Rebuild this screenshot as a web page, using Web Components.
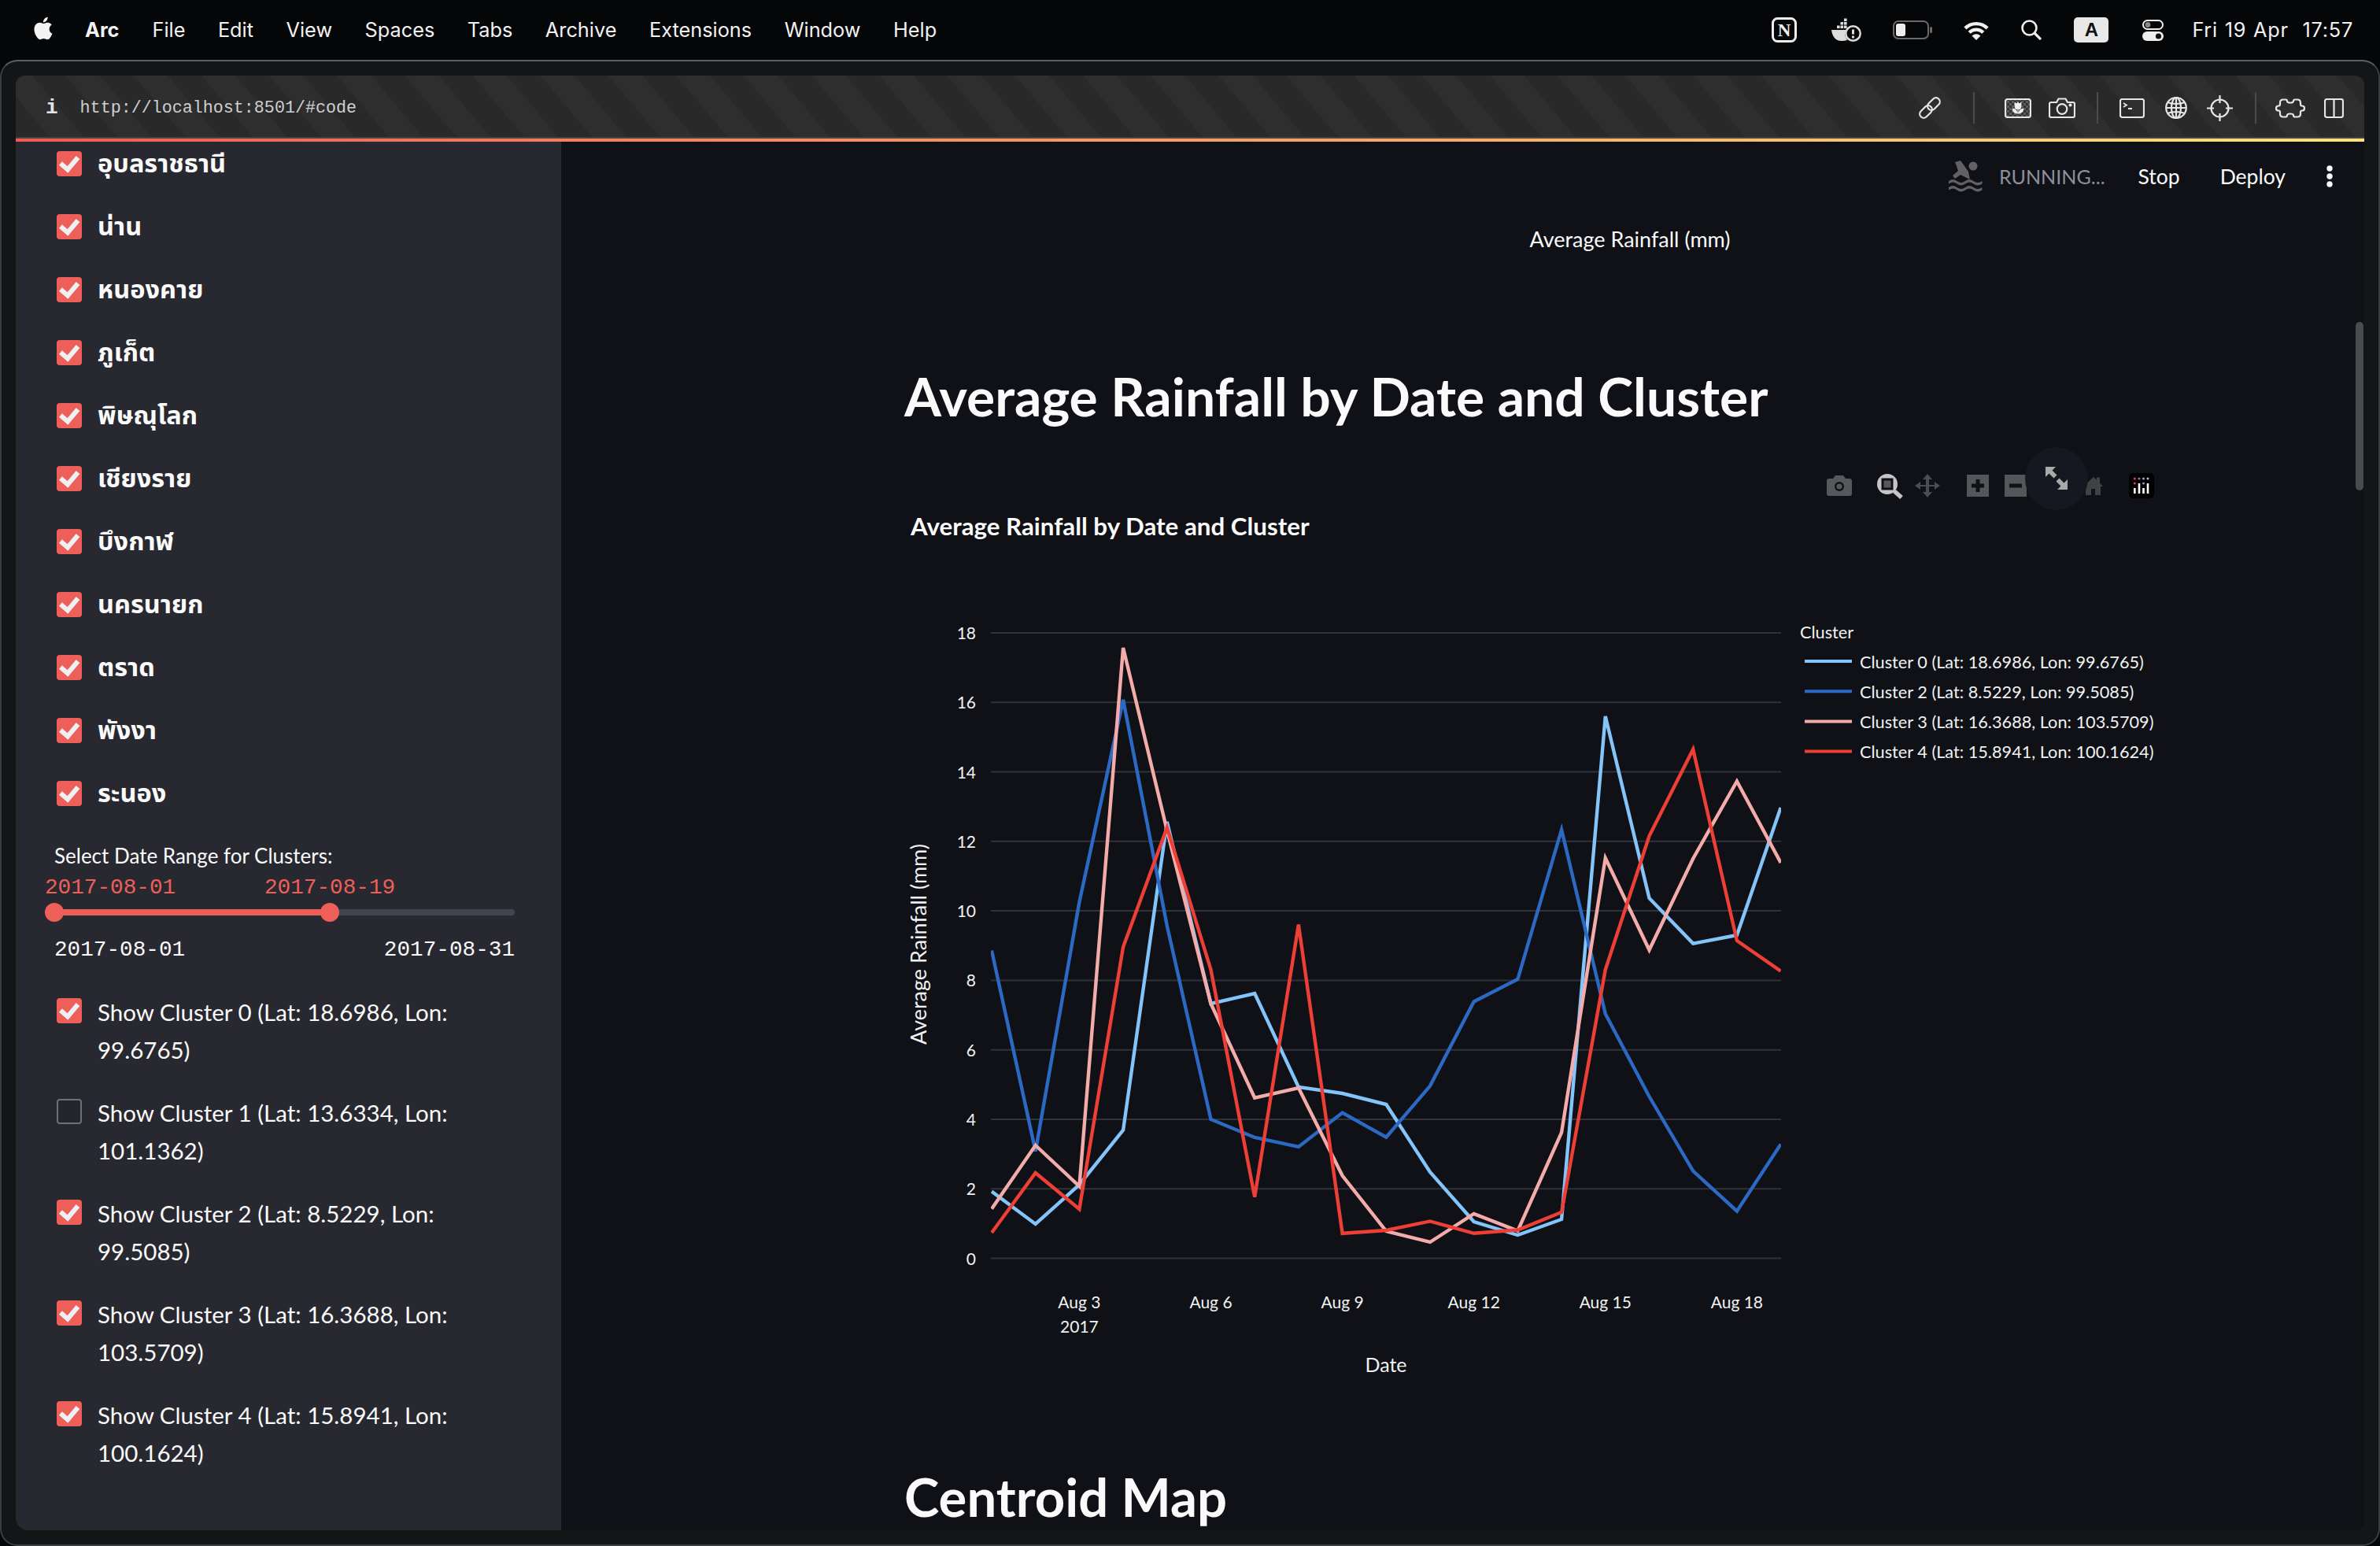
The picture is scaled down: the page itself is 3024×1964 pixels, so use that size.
<!DOCTYPE html>
<html lang="en">
<head>
<meta charset="utf-8">
<title>Average Rainfall</title>
<style>
  html, body { margin: 0; padding: 0; }
  body {
    width: 3024px;
    height: 1964px;
    overflow: hidden;
    background: #050608;
    color: #fafafa;
    font-family: "Lato", "Noto Sans", "Noto Sans Thai", "DejaVu Sans", sans-serif;
    display: flex;
    flex-direction: column;
  }
</style>
</head>
<body>
  <mac-menubar></mac-menubar>
  <browser-window>
    <url-bar></url-bar>
    <div style="display:flex;flex:1;min-height:0">
      <app-sidebar>
        <st-check checked lang="th">อุบลราชธานี</st-check>
        <st-check checked lang="th">น่าน</st-check>
        <st-check checked lang="th">หนองคาย</st-check>
        <st-check checked lang="th">ภูเก็ต</st-check>
        <st-check checked lang="th">พิษณุโลก</st-check>
        <st-check checked lang="th">เชียงราย</st-check>
        <st-check checked lang="th">บึงกาฬ</st-check>
        <st-check checked lang="th">นครนายก</st-check>
        <st-check checked lang="th">ตราด</st-check>
        <st-check checked lang="th">พังงา</st-check>
        <st-check checked lang="th">ระนอง</st-check>
        <date-slider></date-slider>
        <st-check checked>Show Cluster 0 (Lat: 18.6986, Lon: 99.6765)</st-check>
        <st-check>Show Cluster 1 (Lat: 13.6334, Lon: 101.1362)</st-check>
        <st-check checked>Show Cluster 2 (Lat: 8.5229, Lon: 99.5085)</st-check>
        <st-check checked>Show Cluster 3 (Lat: 16.3688, Lon: 103.5709)</st-check>
        <st-check checked>Show Cluster 4 (Lat: 15.8941, Lon: 100.1624)</st-check>
      </app-sidebar>
      <app-main>
        <rain-chart></rain-chart>
      </app-main>
    </div>
  </browser-window>

<script>
class MacMenubar extends HTMLElement {
  constructor() {
    super();
    const shadow = this.attachShadow({ mode: "open" });
    const items = ["File", "Edit", "View", "Spaces", "Tabs", "Archive", "Extensions", "Window", "Help"];
    shadow.innerHTML = `
      <style>
        :host { display: flex; align-items: center; box-sizing: border-box; height: 76px; padding-bottom: 2px; flex: none; font-family: "Inter", sans-serif; font-size: 25.3px; color: #f2f2f2; }
        .apple { margin-left: 38px; width: 34px; height: 34px; margin-top: -2px; }
        b { margin-left: 36px; font-weight: 700; }
        .menu { display: flex; gap: 41.5px; margin-left: 42px; }
        .right { margin-left: auto; display: flex; align-items: center; padding-right: 34px; padding-top: 2px; }
        .clock { margin-left: 36px; word-spacing: 1px; letter-spacing: .75px; margin-top: -2px; }
        svg { display: block; }
        .key { width: 44px; height: 32px; border-radius: 5px; background: #e8e8e8; color: #111; display: flex; align-items: center; justify-content: center; font: 700 24px "Liberation Sans", sans-serif; }
      </style>
      <svg class="apple" viewBox="0 0 24 24" fill="#f4f4f4"><path d="M18.71 19.5c-.83 1.24-1.71 2.45-3.05 2.47-1.34.03-1.77-.79-3.29-.79-1.53 0-2 .77-3.27.82-1.31.05-2.3-1.32-3.14-2.53C4.25 17 2.94 12.45 4.7 9.39c.87-1.52 2.43-2.48 4.12-2.51 1.28-.02 2.5.87 3.29.87.78 0 2.26-1.07 3.81-.91.65.03 2.47.26 3.64 1.98-.09.06-2.17 1.28-2.15 3.81.03 3.02 2.65 4.03 2.68 4.04-.03.07-.42 1.44-1.38 2.83M13 3.5c.73-.83 1.94-1.46 2.94-1.5.13 1.17-.34 2.35-1.04 3.19-.69.85-1.83 1.51-2.95 1.42-.15-1.15.41-2.35 1.05-3.11z"/></svg>
      <b>Arc</b>
      <div class="menu">${items.map((m) => `<span>${m}</span>`).join("")}</div>
      <div class="right">
        <svg width="32" height="32" viewBox="0 0 32 32"><rect x="1.5" y="1.5" width="29" height="29" rx="6" fill="none" stroke="#eee" stroke-width="3"/><text x="16" y="24" text-anchor="middle" font-family="Liberation Serif" font-weight="700" font-size="23" fill="#eee">N</text></svg>
        <svg style="margin-left:44px" width="38" height="30" viewBox="0 0 38 30" fill="#ddd">
          <path d="M0 15h19a10 10 0 0 0-1 9l2 4q-3 1-7 1C5 29 1 23 0 15z"/>
          <path d="M7 9.500h3.600v3.600H7zM11.500 9.500h3.600v3.600h-3.600zM16 9.500h3.600v3.600H16zM11.500 5h3.600v3.600h-3.600zM16 5h3.600v3.600H16zM16 .5h3.600v3.600H16z"/>
          <circle cx="27.500" cy="19.500" r="9.200" fill="#050608" stroke="#ddd" stroke-width="2.500"/>
          <path d="M27.500 14.500v6" stroke="#ddd" stroke-width="3"/><circle cx="27.500" cy="24" r="1.700"/>
        </svg>
        <svg style="margin-left:40px" width="51" height="24" viewBox="0 0 51 24"><rect x="1" y="1" width="44" height="22" rx="6" fill="none" stroke="#6a6a6a" stroke-width="2"/><rect x="4" y="4" width="12" height="16" rx="3" fill="#eee"/><rect x="47" y="8" width="3" height="8" rx="1.500" fill="#6a6a6a"/></svg>
        <svg style="margin-left:38px" width="34" height="26" viewBox="0 0 34 26" fill="none" stroke="#f0f0f0" stroke-width="4.400"><path d="M2.900 10.900a20 20 0 0 1 28.200 0M8.200 16.200a12.500 12.500 0 0 1 17.600 0"/><path d="M17 26l-5.500-5.500a7.800 7.800 0 0 1 11 0z" fill="#f0f0f0" stroke="none"/></svg>
        <svg style="margin-left:40px" width="26" height="26" viewBox="0 0 26 26" fill="none" stroke="#eee"><circle cx="10.500" cy="10.500" r="9" stroke-width="2.600"/><path d="M17 17l8 8" stroke-width="3.200"/></svg>
        <span class="key" style="margin-left:41px">A</span>
        <svg style="margin-left:43px" width="27" height="27" viewBox="0 0 27 27"><rect x="1" y="1" width="25" height="11" rx="5.500" fill="none" stroke="#eee" stroke-width="2"/><circle cx="7" cy="6.500" r="3.400" fill="#888"/><rect y="15" width="27" height="12" rx="6" fill="#eee"/><circle cx="20.500" cy="21" r="3.600" fill="#111"/></svg>
        <span class="clock">Fri 19 Apr&nbsp; 17:57</span>
      </div>
    `;
  }
}

class BrowserWindow extends HTMLElement {
  constructor() {
    super();
    this.attachShadow({ mode: "open" }).innerHTML = `
      <style>
        :host {
          display: flex;
          flex-direction: column;
          flex: 1;
          min-height: 0;
          box-sizing: border-box;
          padding: 18px 18px 18px 18px;
          background: #141517;
          border: 2px solid #3c3d3e;
          border-top-color: #5e5f60;
          border-radius: 22px;
        }
      </style>
      <slot></slot>
    `;
  }
}

class UrlBar extends HTMLElement {
  constructor() {
    super();
    this.attachShadow({ mode: "open" }).innerHTML = `
      <style>
        :host { display: block; flex: none; }
        .bar {
          display: flex;
          align-items: center;
          height: 78px;
          box-sizing: border-box;
          padding: 4px 26px 0 38px;
          border-radius: 12px 12px 0 0;
          color: #cfcfcf;
          background: repeating-linear-gradient(50deg, #29292a 0 33px, #2e2e2f 33px 66px);
          font: 21.7px "Liberation Mono", monospace;
        }
        .band { height: 2px; background: #444445; }
        .line { height: 4px; background: linear-gradient(90deg, #ee5a52, #f4875f 30%, #f6a866 60%, #fde47f); }
        .i { font-weight: 700; color: #e4e4e4; font-size: 26px; }
        .url { margin-left: 28px; }
        .tools { margin-left: auto; display: flex; align-items: center; }
        .sep { width: 2px; height: 40px; background: #4b4b4c; }
        svg { display: block; fill: none; stroke: #e6e6e6; stroke-width: 2.2; }
      </style>
      <div class="bar">
      <span class="i">i</span>
      <span class="url">http://localhost:8501/#code</span>
      <div class="tools">
        <svg width="30" height="30" viewBox="0 0 30 30"><g transform="rotate(45 15 15)"><rect x="10" y="-1" width="10" height="18" rx="5"/><rect x="10" y="13" width="10" height="18" rx="5"/></g></svg>
        <span class="sep" style="margin-left:40px"></span>
        <svg style="margin-left:38px" width="34" height="25" viewBox="0 0 34 25">
          <defs><pattern id="ch" width="6" height="6" patternUnits="userSpaceOnUse"><rect width="6" height="6" fill="#333" stroke="none"/><rect width="3" height="3" fill="#5c5c5c" stroke="none"/><rect x="3" y="3" width="3" height="3" fill="#5c5c5c" stroke="none"/></pattern></defs>
          <rect x="1" y="1" width="32" height="23" rx="3" fill="url(#ch)"/>
          <path d="M13 5l2 2 2-2 2 2 2-2v5a4 4 0 0 1-8 0zM17 14v6M10 13q5 0 6.500 6q-6 0-6.500-6zM24 13q-5 0-6.500 6q6 0 6.500-6z" fill="#f0f0f0" stroke="#f0f0f0" stroke-width=".8"/>
        </svg>
        <svg style="margin-left:22px" width="34" height="26" viewBox="0 0 34 26"><path d="M3 6h7l2.500-4.500h9L24 6h7q2 0 2 2v15q0 2-2 2H3q-2 0-2-2V8q0-2 2-2z"/><circle cx="17" cy="14.500" r="6.300"/><circle cx="27.500" cy="9.500" r="1" fill="#e6e6e6"/></svg>
        <span class="sep" style="margin-left:27px"></span>
        <svg style="margin-left:27px" width="32" height="25" viewBox="0 0 32 25"><rect x="1" y="1" width="30" height="23" rx="2.500"/><path d="M5 6l4 2.500L5 11M11 13h5" stroke-width="1.800"/></svg>
        <svg style="margin-left:26px" width="28" height="28" viewBox="0 0 28 28" stroke-width="1.800"><ellipse cx="14" cy="14" rx="12.800" ry="13"/><ellipse cx="14" cy="14" rx="6" ry="13"/><path d="M14 1v26M3 7q11 4 22 0M1.500 14h25M3 21q11-4 22 0"/></svg>
        <svg style="margin-left:25px" width="33" height="33" viewBox="0 0 33 33"><circle cx="16.500" cy="16.500" r="11"/><path d="M16.500 0v10M16.500 23v10M0 16.500h9M24 16.500h9"/></svg>
        <span class="sep" style="margin-left:28px"></span>
        <svg style="margin-left:24px" width="38" height="25" viewBox="0 0 38 25"><path d="M10 1.500h3q2 0 2 2t4 2q4 0 4-2t2-2h3q4 0 4 4v2q0 2 2 2 3 0 3 3t-3 3q-2 0-2 2v2q0 4-4 4h-3q-2 0-2-2t-4-2q-4 0-4 2t-2 2h-3q-4 0-4-4v-2q0-2-2-2-3 0-3-3t3-3q2 0 2-2v-2q0-4 4-4z"/></svg>
        <svg style="margin-left:24px" width="25" height="25" viewBox="0 0 25 25"><rect x="1" y="1" width="23" height="23" rx="2.500"/><path d="M12.500 1v23"/></svg>
      </div>
      </div>
      <div class="band"></div>
      <div class="line"></div>
    `;
  }
}

class AppSidebar extends HTMLElement {
  constructor() {
    super();
    this.attachShadow({ mode: "open" }).innerHTML = `
      <style>
        :host {
          display: flex;
          flex-direction: column;
          gap: 32px;
          flex: none;
          width: 693px;
          box-sizing: border-box;
          padding: 6px 59px 0 49px;
          background: #282930;
          border-radius: 0 0 0 16px;
          overflow: hidden;
        }
      </style>
      <slot></slot>
    `;
  }
}

class StCheck extends HTMLElement {
  constructor() {
    super();
    const checked = this.hasAttribute("checked");
    this.attachShadow({ mode: "open" }).innerHTML = `
      <style>
        :host { display: flex; gap: 20px; padding-left: 3px; font-size: 29.5px; line-height: 48px; color: #fafafa; }
        :host([lang="th"]) { font-size: 32.5px; font-weight: 700; height: 48px; }
        :host([lang="th"]) .label { margin-top: -3px; }
        .box { flex: none; box-sizing: border-box; width: 32px; height: 32px; margin-top: 6px; border-radius: 4px; }
        .on { background: #ef5f5a; }
        .off { background: #24252c; border: 2px solid #6f7076; }
        svg { display: block; }
      </style>
      <span class="box ${checked ? "on" : "off"}">
        ${checked ? `<svg width="32" height="32" viewBox="0 0 32 32"><path d="M5 15.500l9 8L27 8" fill="none" stroke="#eff0f3" stroke-width="6"/></svg>` : ""}
      </span>
      <span class="label"><slot></slot></span>
    `;
  }
}

class DateSlider extends HTMLElement {
  constructor() {
    super();
    this.attachShadow({ mode: "open" }).innerHTML = `
      <style>
        :host { display: block; margin: 1px 0 3px; }
        .title { font-size: 26px; line-height: 40px; }
        .slider { position: relative; padding-top: 48px; }
        .mono { font: 27.7px "Liberation Mono", monospace; }
        .val { position: absolute; top: 2px; line-height: 38px; color: #ef5f5a; }
        .track { height: 8px; border-radius: 4px; background: #43444e; }
        .fill { height: 8px; width: 350px; border-radius: 4px 0 0 4px; background: #ef5f5a; }
        .thumb { position: absolute; top: 40px; width: 24px; height: 24px; border-radius: 50%; background: #ef5f5a; }
        .ticks { display: flex; justify-content: space-between; margin-top: 24px; line-height: 40px; color: #fafafa; }
      </style>
      <div class="title">Select Date Range for Clusters:</div>
      <div class="slider">
        <span class="mono val" style="left:-12px">2017-08-01</span>
        <span class="mono val" style="left:267px">2017-08-19</span>
        <div class="track"><div class="fill"></div></div>
        <span class="thumb" style="left:-12px"></span>
        <span class="thumb" style="left:338px"></span>
        <div class="mono ticks"><span>2017-08-01</span><span>2017-08-31</span></div>
      </div>
    `;
  }
}

class AppMain extends HTMLElement {
  constructor() {
    super();
    this.attachShadow({ mode: "open" }).innerHTML = `
      <style>
        :host { display: block; position: relative; flex: 1; min-width: 0; background: #0f1116; overflow: hidden; border-radius: 0 0 12px 0; }
        .bar { display: flex; align-items: center; justify-content: flex-end; height: 88px; padding-right: 40px; font-size: 26.5px; }
        .bar svg { display: block; }
        .status { color: #8d8f9b; margin-left: 21px; font-size: 25.1px; }
        .content { padding: 12px 11px 0 436px; }
        .caption { text-align: center; font-size: 27px; line-height: 48px; }
        h1 { margin: 135px 0 0; font-size: 67.8px; line-height: 80px; font-weight: 700; color: #fafafa; }
        h2 { margin: 71px 0 0; font-size: 67px; line-height: 80px; font-weight: 700; color: #fafafa; }
        .thumb { position: absolute; right: 1px; top: 229px; width: 10px; height: 214px; border-radius: 5px; background: #4a4b50; }
      </style>
      <div class="bar">
        <svg width="43" height="40" viewBox="0 0 43 40" fill="#626264">
          <circle cx="31" cy="7" r="5.500"/>
          <path d="M8 2l7-2 10 14 2 10-6-3-6-3-7 5-3-4 7-6-2-6z"/>
          <path d="M0 26q5-4 10.500 0t10.500 0 10.500 0 11 0v3.500q-6 4-11 0t-10.500 0-10.500 0-10.500 0zM0 34q5-4 10.500 0t10.500 0 10.500 0 11 0v3.500q-6 4-11 0t-10.500 0-10.500 0-10.500 0z"/>
        </svg>
        <span class="status">RUNNING...</span>
        <span style="margin-left:42px">Stop</span>
        <span style="margin-left:51px">Deploy</span>
        <svg style="margin-left:52px" width="8" height="28" viewBox="0 0 8 28" fill="#fafafa"><circle cx="4" cy="4" r="3.700"/><circle cx="4" cy="14" r="3.700"/><circle cx="4" cy="24" r="3.700"/></svg>
      </div>
      <div class="content">
        <div class="caption">Average Rainfall (mm)</div>
        <h1>Average Rainfall by Date and Cluster</h1>
        <slot></slot>
        <h2>Centroid Map</h2>
      </div>
      <div class="thumb"></div>
    `;
  }
}

// pixel readings of the lines, one y per day, Aug 1 to Aug 19
const SERIES = [
  { color: "#83c5fb", name: "Cluster 0 (Lat: 18.6986, Lon: 99.6765)", y: [1513.6, 1555, 1505, 1435.7, 1044, 1275, 1262, 1381, 1389, 1403, 1489, 1552, 1569, 1549, 910, 1141, 1198.6, 1188, 1026] },
  { color: "#2c69c4", name: "Cluster 2 (Lat: 8.5229, Lon: 99.5085)", y: [1207.5, 1462.5, 1146, 889, 1176, 1422, 1445, 1457, 1413.6, 1444.6, 1379.6, 1272.5, 1244, 1054, 1288, 1393, 1487.5, 1538.6, 1453.6] },
  { color: "#f3acaa", name: "Cluster 3 (Lat: 16.3688, Lon: 103.5709)", y: [1535.7, 1455, 1507, 823, 1055, 1275, 1394.6, 1382, 1493.6, 1564, 1578, 1542, 1563.6, 1438.6, 1090, 1206.8, 1090.7, 992.5, 1096] },
  { color: "#ee3f36", name: "Cluster 4 (Lat: 15.8941, Lon: 100.1624)", y: [1566, 1490, 1536, 1203, 1051.4, 1231.8, 1520.7, 1174.6, 1566.8, 1563, 1551.4, 1566.8, 1562.5, 1540, 1231.8, 1062, 952, 1195, 1233.6] },
];

class RainChart extends HTMLElement {
  constructor() {
    super();
    const shadow = this.attachShadow({ mode: "open" });
    const left = 1260, step = 55.7, zero = 1598.6;
    const xAt = (i) => left + i * step;
    const grid = [0, 2, 4, 6, 8, 10, 12, 14, 16, 18].map((v) => {
      const y = zero - v * 44.15;
      return `<line x1="1259" x2="2263" y1="${y}" y2="${y}" stroke="#31323b" stroke-width="2"/>
        <text x="1240" y="${y + 8}" text-anchor="end" class="tick">${v}</text>`;
    }).join("");
    const ticks = [["Aug 3", 2], ["Aug 6", 5], ["Aug 9", 8], ["Aug 12", 11], ["Aug 15", 14], ["Aug 18", 17]]
      .map(([t, i]) => `<text x="${xAt(i)}" y="1662" text-anchor="middle" class="tick">${t}</text>`).join("");
    const lines = SERIES.map((s) => `<polyline fill="none" stroke="${s.color}" stroke-width="4.4" stroke-linejoin="miter" points="${s.y.map((y, i) => `${xAt(i)},${y}`).join(" ")}"/>`).join("");
    const legend = SERIES.map((s, i) => {
      const y = 840 + i * 38.2;
      return `<line x1="2293" x2="2353" y1="${y}" y2="${y}" stroke="${s.color}" stroke-width="4"/>
        <text x="2363" y="${y + 8.5}" class="leg">${s.name}</text>`;
    }).join("");
    shadow.innerHTML = `
      <style>
        :host { display: block; margin-top: 17px; width: 1640px; height: 1230px; }
        svg { display: block; }
        text { fill: #f0f1f2; font-family: "Lato", "Noto Sans", sans-serif; }
        .tick { font-size: 21px; }
        .leg { font-size: 21.7px; }
        .axis { font-size: 25px; }
        .ytitle { font-size: 27px; }
        .title { font-size: 31.3px; font-weight: 700; fill: #fafafa; }
      </style>
      <svg width="1640" height="1230" viewBox="1149 560 1640 1230">
        <defs><clipPath id="plot"><rect x="1259" y="780" width="1004" height="840"/></clipPath></defs>
        <text x="1157" y="680" class="title">Average Rainfall by Date and Cluster</text>
        ${grid}
        <g clip-path="url(#plot)">${lines}</g>
        ${ticks}
        <text x="1371.4" y="1693" text-anchor="middle" class="tick">2017</text>
        <text x="1761" y="1743" text-anchor="middle" class="axis">Date</text>
        <text transform="translate(1177 1199.500) rotate(-90)" text-anchor="middle" class="ytitle">Average Rainfall (mm)</text>
        <text x="2287" y="811" class="leg">Cluster</text>
        ${legend}
        <!-- modebar -->
        <g fill="#57585b">
          <path d="M2321 611q0-3 3-3h5l3-4h10l3 4h5q3 0 3 3v16q0 3-3 3h-26q-3 0-3-3z"/>
          <circle cx="2337" cy="618" r="6" fill="#0f1116" stroke="none"/><circle cx="2337" cy="618" r="3.600"/>
        </g>
        <g>
          <circle cx="2398" cy="615" r="13" fill="#c6c6c6"/>
          <rect x="2392" y="609" width="12" height="12" fill="#57585b" stroke="#0f1116" stroke-width="3"/>
          <path d="M2407 624l9 8" stroke="#c6c6c6" stroke-width="5.500"/>
        </g>
        <path d="M2449 602l6 7h-4v7h7v-4l7 5-7 5v-4h-7v7h4l-6 7-6-7h4v-7h-7v4l-7-5 7-5v4h7v-7h-4z" fill="#4c4d50"/>
        <rect x="2499" y="603" width="28" height="28" fill="#55565a"/><path d="M2513 609v16M2505 617h16" stroke="#0f1116" stroke-width="5"/>
        <rect x="2547" y="603" width="28" height="28" fill="#55565a"/><path d="M2553 617h16" stroke="#0f1116" stroke-width="5"/>
        <path d="M2650 629v-11h-3l13-12 4 3.500v-3h4v7l4 4.500h-3v11h-7v-8h-5v8z" fill="#414245"/>
        <circle cx="2613" cy="608" r="40" fill="#151820"/>
        <g fill="#a9a9a9"><path d="M2599 593h13l-4.500 4.500 6 6-4 4-6-6-4.500 4.500z"/><path d="M2627 622h-13l4.500-4.500-6-6 4-4 6 6 4.500-4.500z"/></g>
        <rect x="2705" y="601" width="32" height="32" rx="5" fill="#000"/>
        <g fill="#e8336d"><circle cx="2712.300" cy="608" r="1.500"/><circle cx="2712.300" cy="614" r="1.500"/></g>
        <circle cx="2718" cy="608" r="1.500" fill="#b266b2"/><circle cx="2723.500" cy="608" r="1.500" fill="#a0a0e0"/><circle cx="2729" cy="608" r="1.500" fill="#7fd4ea"/>
        <circle cx="2723.500" cy="614" r="1.500" fill="#a98ad0"/>
        <path d="M2712.300 620v7M2718 614v13M2723.500 620v7M2729 614v13" stroke="#fff" stroke-width="2.600"/>
      </svg>
    `;
  }
}

customElements.define("mac-menubar", MacMenubar);
customElements.define("browser-window", BrowserWindow);
customElements.define("url-bar", UrlBar);
customElements.define("app-sidebar", AppSidebar);
customElements.define("st-check", StCheck);
customElements.define("date-slider", DateSlider);
customElements.define("app-main", AppMain);
customElements.define("rain-chart", RainChart);
</script>
</body>
</html>
